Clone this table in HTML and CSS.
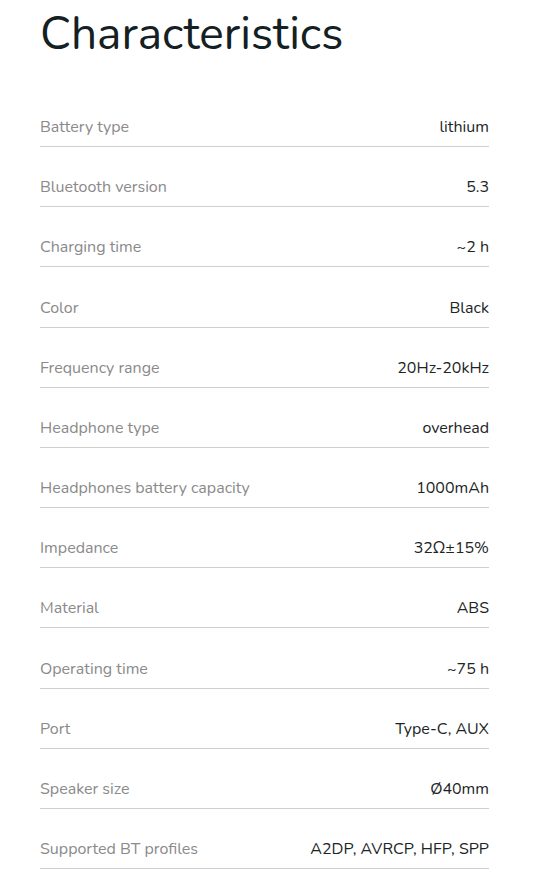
FILE: index.html
```html
<!DOCTYPE html>
<html>
<head>
<meta charset="utf-8">
<link rel="stylesheet" href="styles.css">
</head>
<body>
<section class="specs">
  <h1 class="title">Characteristics</h1>
  <div class="list">
    <div class="row"><span class="label">Battery type</span><span class="value">lithium</span></div>
    <div class="row"><span class="label">Bluetooth version</span><span class="value">5.3</span></div>
    <div class="row"><span class="label">Charging time</span><span class="value">~2 h</span></div>
    <div class="row"><span class="label">Color</span><span class="value">Black</span></div>
    <div class="row"><span class="label">Frequency range</span><span class="value">20Hz-20kHz</span></div>
    <div class="row"><span class="label">Headphone type</span><span class="value">overhead</span></div>
    <div class="row"><span class="label">Headphones battery capacity</span><span class="value">1000mAh</span></div>
    <div class="row"><span class="label">Impedance</span><span class="value">32Ω±15%</span></div>
    <div class="row"><span class="label">Material</span><span class="value">ABS</span></div>
    <div class="row"><span class="label">Operating time</span><span class="value">~75 h</span></div>
    <div class="row"><span class="label">Port</span><span class="value">Type-C, AUX</span></div>
    <div class="row"><span class="label">Speaker size</span><span class="value">Ø40mm</span></div>
    <div class="row"><span class="label">Supported BT profiles</span><span class="value">A2DP, AVRCP, HFP, SPP</span></div>
  </div>
</section>
</body>
</html>
```
FILE: styles.css
```css
html, body {
  margin: 0;
  padding: 0;
  background: #fff;
}
body {
  font-family: "Nunito", Lato, "Noto Sans", sans-serif;
  color: #1b2525;
}
.specs {
  padding: 0 49px 0 40px;
}
.title {
  margin: 0;
  padding-top: 4px;
  font-size: 46px;
  font-weight: 400;
  line-height: 60px;
  color: #142022;
}
.list {
  margin-top: 23px;
}
.row {
  display: flex;
  justify-content: space-between;
  align-items: flex-end;
  height: 60.17px;
  padding-bottom: 9px;
  box-sizing: border-box;
  border-bottom: 1px solid #cfcfcf;
  font-size: 16px;
  line-height: 20px;
}
.label {
  color: #8a8a8a;
}
.value {
  color: #1b2525;
}
```
